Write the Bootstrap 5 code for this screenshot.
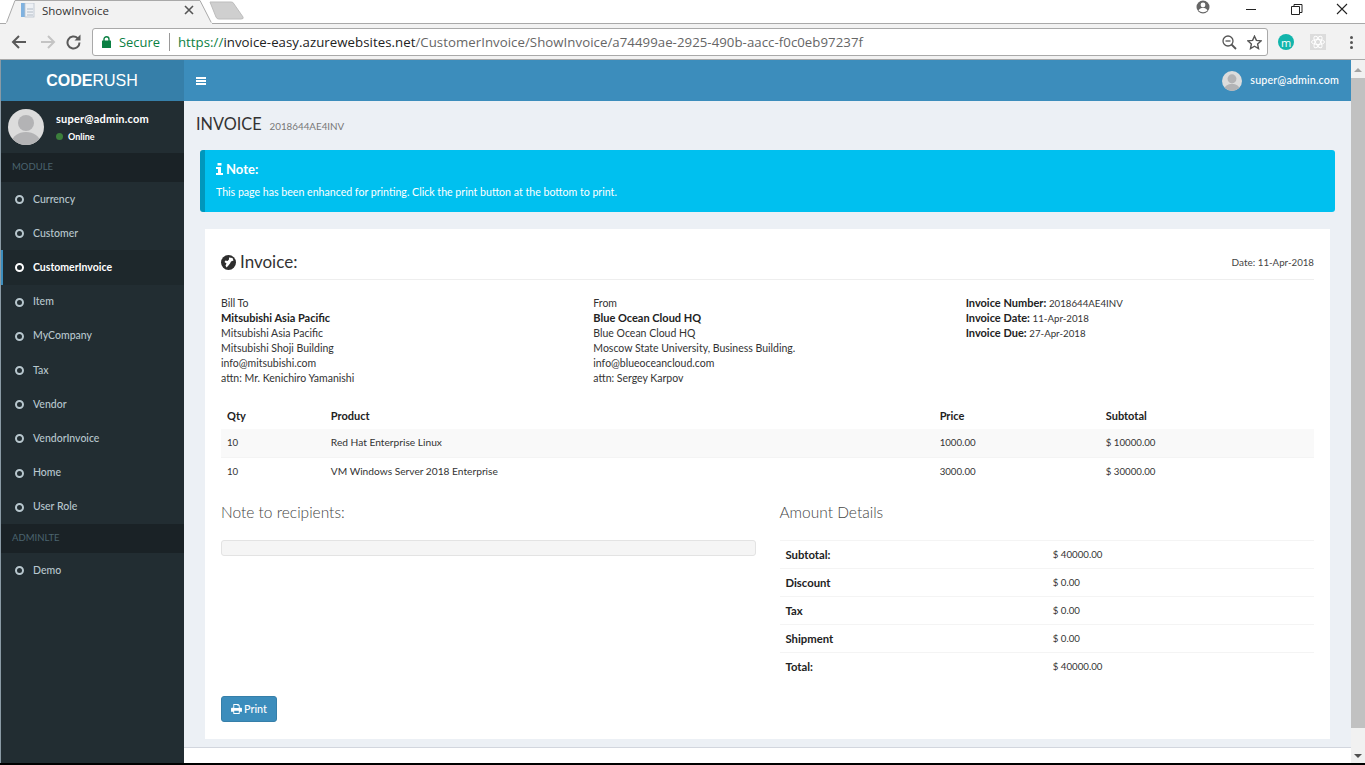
<!DOCTYPE html>
<html lang="en">
<head>
<meta charset="utf-8">
<title>ShowInvoice</title>
<link href="https://cdn.jsdelivr.net/npm/bootstrap@5.3.0/dist/css/bootstrap.min.css" rel="stylesheet">
<style>
html,body{height:765px;overflow:hidden;margin:0}
body{font-family:"Lato","Liberation Sans",sans-serif;font-size:10.5px;color:#333;background:#000;display:flex;flex-direction:column;padding-bottom:2px}
/* browser chrome */
.tabstrip{height:24px;background:#fff;display:flex;position:relative;border-bottom:1px solid #a9a9a9;flex:none}
.tabshape{position:absolute;left:0;top:0}
.tabitem{position:relative;width:196px;margin-left:21px;height:21px;display:flex;align-items:center;font:11.5px "Open Sans",sans-serif;color:#333;padding-left:21px}
.tabx{position:absolute;left:161px;top:3px}
.winbtns{position:relative;margin-left:auto;display:flex;align-items:flex-start}
.toolbar{height:36px;background:#f2f2f2;border-bottom:1px solid #a9a9a9;display:flex;align-items:center;flex:none;padding:1px 0 0 10px}
.navic{width:21px;height:18px;margin-right:7px;flex:none}
.omni{margin-left:10px;width:1176px;height:28px;background:#fff;border:1px solid #a9a9a9;border-radius:3px;display:flex;align-items:center;font:14px "Open Sans",sans-serif;padding-left:9px;flex:none;white-space:nowrap}
.sec{color:#0b8043;font-size:12.9px;margin-left:8px;padding-right:9px;border-right:1px solid #999;line-height:18px;margin-right:8px}
.urlg{color:#0b8043}.urld{color:#222}.urlp{color:#666}
.urltext{font-size:13.22px;letter-spacing:.05px}
.omniend{margin-left:auto;display:flex;gap:10px;padding-right:5px;align-items:center}
.ext{margin-left:10px;display:flex;align-items:center;gap:16px}
.mcircle{width:16px;height:16px;border-radius:50%;background:#12b5ac;color:#fff;font:11px "Open Sans",sans-serif;display:flex;align-items:center;justify-content:center}
.dots{margin-left:24px;width:4px;display:flex;flex-direction:column;gap:2px}
.dots i{display:block;width:3px;height:3px;border-radius:50%;background:#555}
/* app */
.appwrap{flex:1;min-height:0;display:flex;background:#ecf0f5;border-left:1px solid #8a9aa5}
.sidecol{width:183px;flex:none;background:#222d32;display:flex;flex-direction:column}
.brandbox{height:41px;flex:none;background:#367fa9;color:#fff;font-family:"Liberation Sans",sans-serif;font-size:16px;display:flex;align-items:center;justify-content:center;padding-right:1px}
.userpanel{height:52px;flex:none;display:flex;padding:8px 7px;color:#fff}
.uname{font-weight:700;font-size:11px;line-height:14px;margin:3px 0 0 12px;letter-spacing:.2px}
.ustat{font-size:9px;font-weight:700;margin:4px 0 0 12px;display:flex;align-items:center;gap:5px}
.gdot{width:7px;height:7px;border-radius:50%;background:#3c7f3c}
.menuhead{height:29px;flex:none;background:#1a2226;color:#4b646f;font-size:9.5px;display:flex;align-items:center;padding-left:11px}
.sidelist .nav-link{height:34.2px;display:flex;align-items:center;padding:1px 0 0 14px;color:#b8c7ce;font-size:10.5px;font-weight:500}
.sidelist .nav-link.active{background:#1e282c;color:#fff;font-weight:700;box-shadow:inset 2px 0 0 #3c8dbc}
.ringic{width:9px;height:9px;border:2px solid #b8c7ce;border-radius:50%;margin-right:9px;flex:none}
.active .ringic{border-color:#fff}
.maincol{flex:1;min-width:0;display:flex;flex-direction:column}
.topnav{height:41px;background:#3c8dbc;flex:none;padding:0 12px 0 12px;display:flex;align-items:center;justify-content:space-between;color:#fff}
.burger{width:10px;display:flex;flex-direction:column;gap:1px}
.burger i{display:block;height:2px;background:#fff}
.topuser{display:flex;align-items:center;gap:8px;font-size:10.7px;font-weight:500;letter-spacing:.15px}
.pagehead{height:49px;padding:13px 0 0 12px;display:flex;align-items:baseline;flex:none}
.pagehead h1{font-size:16.3px;font-weight:400;margin:0;color:#333;line-height:20px}
.pagehead span{font-size:9.8px;color:#777;margin-left:8px}
.notebox{margin:0 16px;height:62px;background:#00c0ef;color:#fff;border:0;border-left:5px solid #0097bc;border-radius:3px;padding:10px 11px;flex:none}
.notebox h4{font-size:13px;font-weight:700;margin:0 0 6px;line-height:18px;display:flex;align-items:center;gap:3px}
.notebox p{margin:0;font-size:10.6px;line-height:16px}
.invsheet{margin:17px 21px 0;height:510px;background:#fff;border:0;border-radius:0;padding:16px;flex:none;line-height:15px}
.invtitle{height:35px;flex:none;border-bottom:1px solid #eee;display:flex;justify-content:space-between;align-items:center;margin-bottom:16px;padding-top:1px}
.invtitle h2{font-size:17px;font-weight:400;margin:0;display:flex;align-items:center;gap:4px;color:#333}
.invtitle small{font-size:10px;color:#444}
.invsheet b{color:#222;font-size:11px;line-height:1}
.numtxt{font-size:9.7px;line-height:1}
.itemtbl{margin:15px 0 0;font-size:10.2px;--bs-table-striped-bg:#f9f9f9;--bs-table-color:#333;--bs-table-striped-color:#333;--bs-table-border-color:#f4f4f4}
.itemtbl th,.itemtbl td{padding:6px;height:28px;line-height:15px;vertical-align:middle}
.itemtbl thead th{border-bottom:0;font-weight:700;color:#222;font-size:11px}
.itemtbl tbody tr:last-child td{border-bottom:0}
.subhead{font-size:15.5px;font-weight:300;color:#444;margin:0;line-height:20px}
.notewell{height:16px;background:#f5f5f5;border:1px solid #e3e3e3;border-radius:3px;margin-top:18px}
.amttbl{margin:18px 0 0;font-size:10.2px;--bs-table-border-color:#f4f4f4;--bs-table-color:#333;border-top:1px solid #f4f4f4}
.amttbl th,.amttbl td{padding:6px;height:28px;line-height:15px;vertical-align:middle}
.amttbl th{width:50%;font-weight:700;color:#222;font-size:11.3px}
.amttbl tr:last-child th,.amttbl tr:last-child td{border-bottom:0}
.printbtn{--bs-btn-bg:#3c8dbc;--bs-btn-border-color:#367fa9;--bs-btn-color:#fff;--bs-btn-padding-x:9px;--bs-btn-padding-y:0;--bs-btn-font-size:10.8px;--bs-btn-border-radius:3px;height:26px;display:inline-flex;align-items:center;gap:2px;font-weight:500;margin-top:15px;line-height:15px}
.footstrip{flex:1;background:#fff;border-top:1px solid #d2d6de;margin-top:8px}
.sbar{width:14px;flex:none;background:#f1f1f1;display:flex;flex-direction:column;align-items:center}
.sbar .thumb{height:650px;width:100%;flex:none;background:#c1c1c1}
.arrowup,.arrowdn{width:0;height:0;flex:none;border-left:4px solid transparent;border-right:4px solid transparent}
.arrowup{border-bottom:4px solid #a3a3a3;margin-top:8px;margin-bottom:6px}
.arrowdn{border-top:4px solid #505050;margin-top:26px}
</style>
</head>
<body>
<div class="tabstrip">
  <svg class="tabshape" width="250" height="24" viewBox="0 0 250 24"><path d="M6 24 L15 .5 L200 .5 L212 24Z" fill="#f2f2f2" stroke="#a9a9a9"/><path d="M6 23.5h206" stroke="#f2f2f2" stroke-width="2"/><path d="M210 2h21a3 3 0 0 1 3 2l9 13q1 2-2 2h-22a3 3 0 0 1-3-2z" fill="#cfcfcf" stroke="#bdbdbd"/></svg>
  <div class="tabitem">
    <svg style="position:absolute;left:0;top:3px" width="15" height="15" viewBox="0 0 15 15"><rect x="0" y="0" width="5" height="14" fill="#7fb2e0"/><rect x="4" y="0" width="9" height="14" fill="#eef1f5" stroke="#b9c2cc" stroke-width=".8"/><path d="M6 6h6M6 9h6M6 12h6" stroke="#b3bcc6"/></svg>
    ShowInvoice
    <svg class="tabx" width="14" height="14" viewBox="0 0 14 14"><path d="M3 3l8 8M11 3l-8 8" stroke="#555" stroke-width="1.6"/></svg>
  </div>
  <div class="winbtns">
    <svg width="170" height="23" viewBox="0 0 170 23"><circle cx="8" cy="7" r="6.5" fill="#666"/><circle cx="8" cy="5" r="2.4" fill="#fff"/><path d="M3.500 10.500c1-2 2.600-2.500 4.500-2.500s3.500.5 4.500 2.500a6.500 6.500 0 0 1-9 0z" fill="#fff"/><path d="M51 9.500h10" stroke="#222"/><path d="M96.500 6.500h8v8h-8zM99 6.500v-2h8v8h-2.500" fill="none" stroke="#222"/><path d="M142 4l10 10M152 4l-10 10" stroke="#222" stroke-width="1.100"/></svg>
  </div>
</div>
<div class="toolbar">
  <svg class="navic" viewBox="0 0 21 18"><path d="M16 9H3M9 3L3 9l6 6" fill="none" stroke="#5a5a5a" stroke-width="2"/></svg>
  <svg class="navic" viewBox="0 0 21 18"><path d="M3 9h13M10 3l6 6-6 6" fill="none" stroke="#c4c4c4" stroke-width="2"/></svg>
  <svg class="navic" style="width:16px;margin:0" viewBox="0 0 16 18"><path d="M13.500 9.500a6 6 0 1 1-1.800-4.300" fill="none" stroke="#5a5a5a" stroke-width="2"/><path d="M14.500 1.500v6h-6z" fill="#5a5a5a"/></svg>
  <div class="omni">
    <svg width="9" height="12" viewBox="0 0 9 12"><rect y="4.500" width="9" height="7.500" rx=".5" fill="#0b8043"/><path d="M2 5V3.200a2.500 2.500 0 0 1 5 0V5" fill="none" stroke="#0b8043" stroke-width="1.400"/></svg>
    <span class="sec">Secure</span>
    <span class="urltext"><span class="urlg">https://</span><span class="urld">invoice-easy.azurewebsites.net</span><span class="urlp">/CustomerInvoice/ShowInvoice/a74499ae-2925-490b-aacc-f0c0eb97237f</span></span>
    <div class="omniend">
      <svg width="15" height="15" viewBox="0 0 15 15"><circle cx="6" cy="6" r="5" fill="none" stroke="#555" stroke-width="1.300"/><path d="M3.500 6h5" stroke="#555" stroke-width="1.300"/><path d="M9.500 9.500l4.500 4.500" stroke="#555" stroke-width="1.800"/></svg>
      <svg width="15" height="15" viewBox="0 0 15 15"><path d="M7.500 1.200l1.900 4.200 4.600.5-3.400 3.100.9 4.500-4-2.300-4 2.300.9-4.500L1 5.900l4.600-.5z" fill="none" stroke="#555" stroke-width="1.400"/></svg>
    </div>
  </div>
  <div class="ext">
    <span class="mcircle">m</span>
    <svg width="16" height="16" viewBox="0 0 16 16"><rect width="16" height="16" fill="#dcdcdc"/><g fill="none" stroke="#fff"><ellipse cx="8" cy="8" rx="6.500" ry="2.500"/><ellipse cx="8" cy="8" rx="6.500" ry="2.500" transform="rotate(60 8 8)"/><ellipse cx="8" cy="8" rx="6.500" ry="2.500" transform="rotate(120 8 8)"/></g></svg>
  </div>
  <div class="dots"><i></i><i></i><i></i></div>
</div>
<div class="appwrap">
  <aside class="sidecol">
    <div class="brandbox"><strong>CODE</strong>RUSH</div>
    <div class="userpanel">
      <svg width="36" height="36" viewBox="0 0 36 36"><defs><clipPath id="av1"><circle cx="18" cy="18" r="18"/></clipPath></defs><circle cx="18" cy="18" r="18" fill="#dcdcdc"/><g clip-path="url(#av1)" fill="#b3b3b5"><circle cx="18" cy="14" r="8"/><ellipse cx="18" cy="33" rx="14" ry="10"/></g></svg>
      <div><div class="uname">super@admin.com</div><div class="ustat"><span class="gdot"></span>Online</div></div>
    </div>
    <div class="menuhead">MODULE</div>
    <nav class="nav flex-column flex-nowrap sidelist">
      <a class="nav-link" href="#"><span class="ringic"></span>Currency</a>
      <a class="nav-link" href="#"><span class="ringic"></span>Customer</a>
      <a class="nav-link active" href="#"><span class="ringic"></span>CustomerInvoice</a>
      <a class="nav-link" href="#"><span class="ringic"></span>Item</a>
      <a class="nav-link" href="#"><span class="ringic"></span>MyCompany</a>
      <a class="nav-link" href="#"><span class="ringic"></span>Tax</a>
      <a class="nav-link" href="#"><span class="ringic"></span>Vendor</a>
      <a class="nav-link" href="#"><span class="ringic"></span>VendorInvoice</a>
      <a class="nav-link" href="#"><span class="ringic"></span>Home</a>
      <a class="nav-link" href="#"><span class="ringic"></span>User Role</a>
    </nav>
    <div class="menuhead">ADMINLTE</div>
    <nav class="nav flex-column flex-nowrap sidelist">
      <a class="nav-link" href="#"><span class="ringic"></span>Demo</a>
    </nav>
  </aside>
  <div class="maincol">
    <header class="topnav">
      <span class="burger"><i></i><i></i><i></i></span>
      <span class="topuser">
        <svg width="20" height="20" viewBox="0 0 36 36"><defs><clipPath id="av2"><circle cx="18" cy="18" r="18"/></clipPath></defs><circle cx="18" cy="18" r="18" fill="#dcdcdc"/><g clip-path="url(#av2)" fill="#b3b3b5"><circle cx="18" cy="14" r="8"/><ellipse cx="18" cy="33" rx="14" ry="10"/></g></svg>
        super@admin.com
      </span>
    </header>
    <div class="pagehead"><h1>INVOICE</h1><span>2018644AE4INV</span></div>
    <div class="alert notebox" role="alert">
      <h4><svg width="7" height="12" viewBox="0 0 7 12"><path d="M1.500 0h4v2.500h-4zM0 4h5v6h2v2H0v-2h2V6H0z" fill="#fff"/></svg> Note:</h4>
      <p>This page has been enhanced for printing. Click the print button at the bottom to print.</p>
    </div>
    <section class="card invsheet">
      <div class="invtitle">
        <h2><svg width="15" height="15" viewBox="0 0 15 15"><circle cx="7.500" cy="7.500" r="7.500" fill="#2e2e2e"/><path d="M8 2.500l3.500.5 1 2.500-2.500 1-1 2-2 2.500-1.500 1.500-1-2 1-2-2-1.500 1-1.500 2 .5 1.500-1.500z" fill="#fff"/></svg>Invoice:</h2>
        <small>Date: <span class="numtxt">11-Apr-2018</span></small>
      </div>
      <div class="row gx-4">
        <div class="col-4">Bill To<br><b>Mitsubishi Asia Pacific</b><br>Mitsubishi Asia Pacific<br>Mitsubishi Shoji Building<br>info@mitsubishi.com<br>attn: Mr. Kenichiro Yamanishi</div>
        <div class="col-4">From<br><b>Blue Ocean Cloud HQ</b><br>Blue Ocean Cloud HQ<br>Moscow State University, Business Building.<br>info@blueoceancloud.com<br>attn: Sergey Karpov</div>
        <div class="col-4"><b>Invoice Number:</b> <span class="numtxt">2018644AE4INV</span><br><b>Invoice Date:</b> <span class="numtxt">11-Apr-2018</span><br><b>Invoice Due:</b> <span class="numtxt">27-Apr-2018</span></div>
      </div>
      <table class="table table-striped itemtbl">
        <colgroup><col style="width:9.500%"><col style="width:55.700%"><col style="width:15.200%"><col></colgroup>
        <thead><tr><th>Qty</th><th>Product</th><th>Price</th><th>Subtotal</th></tr></thead>
        <tbody>
          <tr><td><span class="numtxt">10</span></td><td>Red Hat Enterprise Linux</td><td><span class="numtxt">1000.00</span></td><td><span class="numtxt">$ 10000.00</span></td></tr>
          <tr><td><span class="numtxt">10</span></td><td>VM Windows Server 2018 Enterprise</td><td><span class="numtxt">3000.00</span></td><td><span class="numtxt">$ 30000.00</span></td></tr>
        </tbody>
      </table>
      <div class="row gx-4" style="margin-top:17px">
        <div class="col-6"><h5 class="subhead">Note to recipients:</h5><div class="notewell"></div></div>
        <div class="col-6">
          <h5 class="subhead">Amount Details</h5>
          <table class="table amttbl"><tbody>
            <tr><th>Subtotal:</th><td><span class="numtxt">$ 40000.00</span></td></tr>
            <tr><th>Discount</th><td><span class="numtxt">$ 0.00</span></td></tr>
            <tr><th>Tax</th><td><span class="numtxt">$ 0.00</span></td></tr>
            <tr><th>Shipment</th><td><span class="numtxt">$ 0.00</span></td></tr>
            <tr><th>Total:</th><td><span class="numtxt">$ 40000.00</span></td></tr>
          </tbody></table>
        </div>
      </div>
      <div><button type="button" class="btn printbtn"><svg width="11" height="10" viewBox="0 0 12 11"><path fill-rule="evenodd" d="M2.500 0H8l1.500 1.500V4H11a1 1 0 0 1 1 1v3.500H9.500V11h-7V8.500H0V5a1 1 0 0 1 1-1h1.500zM3.500 1v3.500h5V2H7V1zM3.500 7.500V10h5V7.500z" fill="#fff"/></svg>Print</button></div>
    </section>
    <footer class="footstrip"></footer>
  </div>
  <div class="sbar"><span class="arrowup"></span><div class="thumb"></div><span class="arrowdn"></span></div>
</div>
</body>
</html>
